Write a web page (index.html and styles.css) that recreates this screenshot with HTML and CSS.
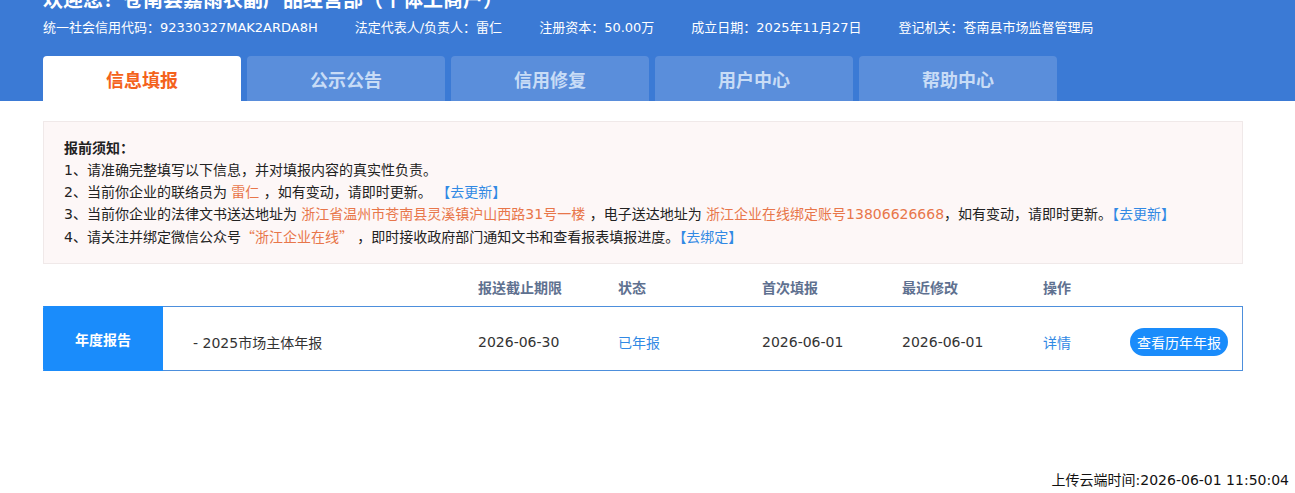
FILE: index.html
```html
<!DOCTYPE html>
<html lang="zh-CN">
<head>
<meta charset="utf-8">
<title>信息填报</title>
<link rel="stylesheet" href="styles.css">
</head>
<body>
<header class="header">
  <h1 class="title">欢迎您！苍南县嘉雨农副产品经营部（个体工商户）</h1>
  <div class="info">
    <span>统一社会信用代码：92330327MAK2ARDA8H</span>
    <span>法定代表人/负责人：雷仁</span>
    <span>注册资本：50.00万</span>
    <span>成立日期：2025年11月27日</span>
    <span>登记机关：苍南县市场监督管理局</span>
  </div>
  <nav class="tabs">
    <a class="tab active">信息填报</a>
    <a class="tab">公示公告</a>
    <a class="tab">信用修复</a>
    <a class="tab">用户中心</a>
    <a class="tab">帮助中心</a>
  </nav>
</header>

<main class="main">
  <section class="notice">
    <div class="notice-title">报前须知：</div>
    <div>1、请准确完整填写以下信息，并对填报内容的真实性负责。</div>
    <div>2、当前你企业的联络员为 <span class="hl">雷仁</span> ，如有变动，请即时更新。 <a class="link">【去更新】</a></div>
    <div>3、当前你企业的法律文书送达地址为 <span class="hl">浙江省温州市苍南县灵溪镇沪山西路31号一楼</span> ，电子送达地址为 <span class="hl">浙江企业在线绑定账号13806626668</span>，如有变动，请即时更新。<a class="link">【去更新】</a></div>
    <div>4、请关注并绑定微信公众号<span class="hl cjk">“浙江企业在线”</span> ，即时接收政府部门通知文书和查看报表填报进度。<a class="link">【去绑定】</a></div>
  </section>

  <div class="thead grid">
    <span></span>
    <span></span>
    <span>报送截止期限</span>
    <span>状态</span>
    <span>首次填报</span>
    <span>最近修改</span>
    <span>操作</span>
    <span></span>
  </div>
  <div class="row grid">
    <div class="label">年度报告</div>
    <div class="cell">- 2025市场主体年报</div>
    <div class="cell">2026-06-30</div>
    <div class="cell blue">已年报</div>
    <div class="cell">2026-06-01</div>
    <div class="cell">2026-06-01</div>
    <div class="cell blue">详情</div>
    <div class="cell"><button class="btn">查看历年年报</button></div>
  </div>
</main>

<footer class="footer">上传云端时间:2026-06-01 11:50:04</footer>
</body>
</html>
```

FILE: styles.css
```css
* { box-sizing: border-box; }
html, body { margin: 0; padding: 0; overflow: hidden; }
body {
  font-family: "DejaVu Sans", "Noto Sans CJK SC", sans-serif;
  color: #222;
  background: #fff;
  width: 1295px;
  height: 493px;
}
.cjk { font-family: "Noto Sans CJK SC", sans-serif; }
.header {
  display: flow-root;
  background: #3b7ad5;
  padding: 0 43px;
  height: 101px;
}
.title {
  margin: -15px 0 0;
  font-size: 20px;
  line-height: 28px;
  font-weight: bold;
  color: #fff;
  white-space: nowrap;
  font-family: "Noto Sans CJK SC", sans-serif;
}
.info {
  margin-top: 5px;
  display: flex;
  gap: 37px;
  color: #fff;
  font-size: 13px;
  line-height: 20px;
}
.tabs {
  margin-top: 18px;
  display: flex;
  gap: 6px;
}
.tab {
  width: 198px;
  height: 45px;
  border-radius: 4px 4px 0 0;
  background: #5a8edb;
  color: #c8dcf6;
  font-size: 18px;
  font-weight: bold;
  display: flex;
  align-items: center;
  justify-content: center;
  font-family: "Noto Sans CJK SC", sans-serif;
}
.tab.active {
  background: #fff;
  color: #f4621c;
}
.main {
  padding: 20px 52px 0 43px;
}
.notice {
  background: #fdf7f7;
  border: 1px solid #f0e9e9;
  padding: 15px 20px;
  font-size: 14px;
  line-height: 22px;
  color: #222;
}
.notice-title { font-weight: bold; }
.hl { color: #e8764a; }
.link { color: #3189e4; }
.grid {
  display: grid;
  grid-template-columns: 120px 315px 140px 144px 140px 141px 87px 1fr;
  align-items: center;
}
.thead {
  margin-top: 14px;
  height: 28px;
  padding-bottom: 9px;
  font-size: 14px;
  font-weight: bold;
  color: #5f7190;
  line-height: 20px;
}
.row {
  height: 65px;
  border: 1px solid #4d8fdc;
  border-left: none;
  font-size: 14px;
  color: #333;
}
.label {
  margin-top: -1px;
  margin-bottom: -1px;
  height: 65px;
  background: #1a8cfb;
  color: #fff;
  font-weight: bold;
  font-size: 14px;
  display: flex;
  align-items: center;
  justify-content: center;
  border-radius: 2px 0 0 2px;
}
.cell {
  padding-top: 7px;
}
.row .cell:nth-child(2) { padding-left: 30px; }
.blue { color: #3189e4; }
.btn {
  border: none;
  background: #1a8cfb;
  color: #fff;
  font-family: "Noto Sans CJK SC", sans-serif;
  font-size: 14px;
  height: 28px;
  padding: 0 7px;
  border-radius: 14px;
  line-height: 28px;
}
.footer {
  margin-top: 99px;
  text-align: right;
  padding-right: 6px;
  font-size: 14px;
  line-height: 20px;
  color: #111;
}
```
